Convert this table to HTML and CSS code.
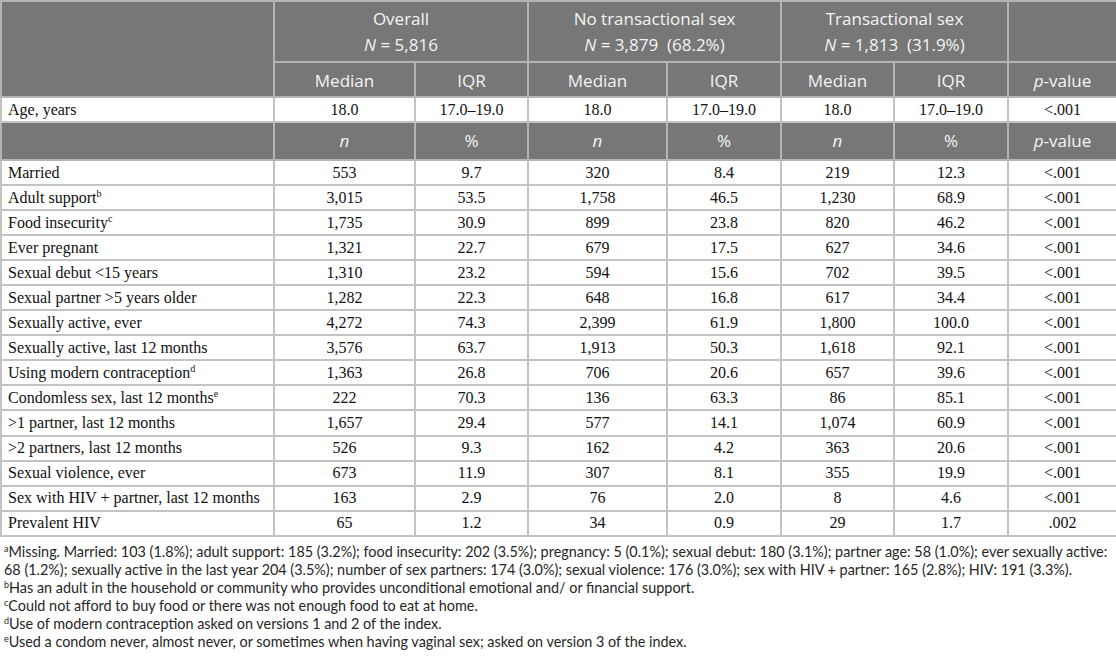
FILE: index.html
```html
<!DOCTYPE html>
<html lang="en">
<head>
  <meta charset="UTF-8" />
  <title>Table 1 - Characteristics by transactional sex</title>
  <link rel="stylesheet" href="styles.css">
</head>
<body>
  <table class="stats">
    <colgroup>
      <col class="c-label">
      <col class="c-a"><col class="c-b">
      <col class="c-c"><col class="c-d">
      <col class="c-e"><col class="c-f">
      <col class="c-p">
    </colgroup>
    <thead>
      <tr class="group-row">
        <th rowspan="2"></th>
        <th colspan="2">Overall<br><i>N</i> = 5,816</th>
        <th colspan="2">No transactional sex<br><i>N</i> = 3,879&nbsp; (68.2%)</th>
        <th colspan="2">Transactional sex<br><i>N</i> = 1,813&nbsp; (31.9%)</th>
        <th></th>
      </tr>
      <tr class="sub-row">
        <th>Median</th><th>IQR</th>
        <th>Median</th><th>IQR</th>
        <th>Median</th><th>IQR</th>
        <th><i>p</i>-value</th>
      </tr>
    </thead>
    <tbody>
      <tr class="age-row">
        <td>Age, years</td>
        <td>18.0</td><td>17.0–19.0</td>
        <td>18.0</td><td>17.0–19.0</td>
        <td>18.0</td><td>17.0–19.0</td>
        <td>&lt;.001</td>
      </tr>
      <tr class="head-row">
        <th></th>
        <th><i>n</i></th><th>%</th>
        <th><i>n</i></th><th>%</th>
        <th><i>n</i></th><th>%</th>
        <th><i>p</i>-value</th>
      </tr>
      <tr><td>Married</td><td>553</td><td>9.7</td><td>320</td><td>8.4</td><td>219</td><td>12.3</td><td>&lt;.001</td></tr>
      <tr><td>Adult support<sup>b</sup></td><td>3,015</td><td>53.5</td><td>1,758</td><td>46.5</td><td>1,230</td><td>68.9</td><td>&lt;.001</td></tr>
      <tr><td>Food insecurity<sup>c</sup></td><td>1,735</td><td>30.9</td><td>899</td><td>23.8</td><td>820</td><td>46.2</td><td>&lt;.001</td></tr>
      <tr><td>Ever pregnant</td><td>1,321</td><td>22.7</td><td>679</td><td>17.5</td><td>627</td><td>34.6</td><td>&lt;.001</td></tr>
      <tr><td>Sexual debut &lt;15 years</td><td>1,310</td><td>23.2</td><td>594</td><td>15.6</td><td>702</td><td>39.5</td><td>&lt;.001</td></tr>
      <tr><td>Sexual partner &gt;5 years older</td><td>1,282</td><td>22.3</td><td>648</td><td>16.8</td><td>617</td><td>34.4</td><td>&lt;.001</td></tr>
      <tr><td>Sexually active, ever</td><td>4,272</td><td>74.3</td><td>2,399</td><td>61.9</td><td>1,800</td><td>100.0</td><td>&lt;.001</td></tr>
      <tr><td>Sexually active, last 12 months</td><td>3,576</td><td>63.7</td><td>1,913</td><td>50.3</td><td>1,618</td><td>92.1</td><td>&lt;.001</td></tr>
      <tr><td>Using modern contraception<sup>d</sup></td><td>1,363</td><td>26.8</td><td>706</td><td>20.6</td><td>657</td><td>39.6</td><td>&lt;.001</td></tr>
      <tr><td>Condomless sex, last 12 months<sup>e</sup></td><td>222</td><td>70.3</td><td>136</td><td>63.3</td><td>86</td><td>85.1</td><td>&lt;.001</td></tr>
      <tr><td>&gt;1 partner, last 12 months</td><td>1,657</td><td>29.4</td><td>577</td><td>14.1</td><td>1,074</td><td>60.9</td><td>&lt;.001</td></tr>
      <tr><td>&gt;2 partners, last 12 months</td><td>526</td><td>9.3</td><td>162</td><td>4.2</td><td>363</td><td>20.6</td><td>&lt;.001</td></tr>
      <tr><td>Sexual violence, ever</td><td>673</td><td>11.9</td><td>307</td><td>8.1</td><td>355</td><td>19.9</td><td>&lt;.001</td></tr>
      <tr><td>Sex with HIV + partner, last 12 months</td><td>163</td><td>2.9</td><td>76</td><td>2.0</td><td>8</td><td>4.6</td><td>&lt;.001</td></tr>
      <tr><td>Prevalent HIV</td><td>65</td><td>1.2</td><td>34</td><td>0.9</td><td>29</td><td>1.7</td><td>.002</td></tr>
    </tbody>
  </table>

  <div class="notes">
    <p><sup>a</sup>Missing. Married: 103 (1.8%); adult support: 185 (3.2%); food insecurity: 202 (3.5%); pregnancy: 5 (0.1%); sexual debut: 180 (3.1%); partner age: 58 (1.0%); ever sexually active: 68 (1.2%); sexually active in the last year 204 (3.5%); number of sex partners: 174 (3.0%); sexual violence: 176 (3.0%); sex with HIV + partner: 165 (2.8%); HIV: 191 (3.3%).</p>
    <p><sup>b</sup>Has an adult in the household or community who provides unconditional emotional and/ or financial support.</p>
    <p><sup>c</sup>Could not afford to buy food or there was not enough food to eat at home.</p>
    <p><sup>d</sup>Use of modern contraception asked on versions 1 and 2 of the index.</p>
    <p><sup>e</sup>Used a condom never, almost never, or sometimes when having vaginal sex; asked on version 3 of the index.</p>
  </div>
</body>
</html>
```

FILE: styles.css
```css
* {
  box-sizing: border-box;
}
body {
  margin: 0;
  background: #fff;
  color: #111;
  font-family: 'Liberation Serif', 'Times New Roman', serif;
}
.stats {
  width: 1116px;
  border-collapse: collapse;
  table-layout: fixed;
  font-size: 16px;
}
.c-label { width: 273px; }
.c-a { width: 141px; }
.c-b { width: 113px; }
.c-c { width: 139px; }
.c-d { width: 114px; }
.c-e { width: 113px; }
.c-f { width: 114px; }
.c-p { width: 109px; }

.stats th,
.stats td {
  border: 2px solid #c3c3c3;
  padding: 0 7px;
  text-align: center;
  vertical-align: middle;
}
.stats th {
  background: #777;
  color: #f4f4f4;
  font-family: 'Open Sans', 'Noto Sans', sans-serif;
  font-weight: 400;
  font-size: 17px;
  line-height: 26px;
}
.stats thead th {
  border-color: #b4b4b4;
}
.group-row th {
  height: 61px;
}
.sub-row th {
  height: 35px;
  padding-top: 2px;
}
.stats .age-row td {
  height: 25px;
}
.head-row th {
  height: 38px;
  border-color: #b4b4b4;
}
.stats td {
  height: 25.05px;
  line-height: 18px;
}
.stats td:first-child {
  text-align: left;
  padding-left: 6px;
}
.stats sup {
  font-size: 10px;
  line-height: 0;
  vertical-align: 6px;
}

.notes {
  padding: 6px 4px 0 4px;
  font-family: 'Lato', 'Liberation Sans', sans-serif;
  font-size: 14.4px;
  line-height: 18px;
  color: #262626;
}
.notes p {
  margin: 0;
}
.notes sup {
  font-size: 9px;
  line-height: 0;
  vertical-align: 5px;
}
```
